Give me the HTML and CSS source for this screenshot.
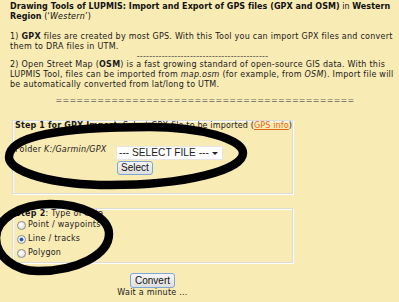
FILE: index.html
```html
<!DOCTYPE html>
<html lang="en">
<head>
<meta charset="utf-8">
<title>Drawing Tools of LUPMIS</title>
<link rel="stylesheet" href="styles.css">
</head>
<body>
<div class="page">
  <p class="title"><b>Drawing Tools of LUPMIS: Import and Export of GPS files (GPX and OSM)</b> in <b>Western Region</b> (‘<i>Western</i>’)</p>
  <p class="para p1">1) <b>GPX</b> files are created by most GPS. With this Tool you can import GPX files and convert them to DRA files in UTM.</p>
  <div class="sep">------------------------------------------</div>
  <p class="para">2) Open Street Map (<b>OSM</b>) is a fast growing standard of open-source GIS data. With this LUPMIS Tool, files can be imported from <i>map.osm</i> (for example, from <i>OSM</i>). Import file will be automatically converted from lat/long to UTM.</p>
  <div class="sep sep2">===========================================</div>

  <div class="form">
    <div class="box box1">
      <div class="legend"><b>Step 1 for GPX Import</b>: Select GPX file to be imported (<a class="link" href="#">GPS info</a>)</div>
      <div class="row">
        <div class="folder">Folder <i>K:/Garmin/GPX</i></div>
        <div class="ctl">
          <div class="select"><span>--- SELECT FILE ---</span><span class="arrow"></span></div>
          <button class="btn btn-select" type="button">Select</button>
        </div>
      </div>
    </div>

    <div class="box box2">
      <div class="legend"><b>Step 2</b>: Type of data</div>
      <label class="radio"><input type="radio" name="t"> Point / waypoints</label>
      <label class="radio"><input type="radio" name="t" checked> Line / tracks</label>
      <label class="radio"><input type="radio" name="t"> Polygon</label>
    </div>

    <div class="convert">
      <button class="btn btn-convert" type="button">Convert</button>
      <div class="wait">Wait a minute ...</div>
    </div>
  </div>

  <svg class="marks" width="399" height="302" viewBox="0 0 399 302" aria-hidden="true">
    <path d="M 9 157 C 9 136, 60 127, 150 127 C 200 127, 243 139, 243 153 C 243 170.7, 183.4 185, 110 185 C 54.2 185, 9 172.5, 9 157 Z"/>
    <path d="M -4 238 C -4 219.2, 20.2 204, 50 204 C 82.6 204, 109 217.4, 109 234 C 109 254.4, 77.2 271, 38 271 C 14.8 271, -4 256.2, -4 238 Z"/>
  </svg>
</div>
</body>
</html>
```

FILE: styles.css
```css
html, body {
  margin: 0;
  padding: 0;
  background: #f9ebb4;
}

.page {
  position: relative;
  width: 399px;
  height: 302px;
  box-sizing: border-box;
  padding: 2px 4px 0 10px;
  overflow: hidden;
  font-family: "DejaVu Sans", Verdana, sans-serif;
  font-size: 8px;
  line-height: 10px;
  letter-spacing: 0.25px;
  color: #1a1a1a;
}

.title {
  margin: 0;
  letter-spacing: 0.05px;
  color: #111;
}

.title i {
  letter-spacing: 0.25px;
}

.para {
  margin: 0;
}

.p1 {
  margin-top: 10px;
}

.sep {
  height: 8px;
  line-height: 10px;
  text-align: center;
  color: #444;
  white-space: nowrap;
}

.sep2 {
  height: 10px;
  margin-top: 6px;
  padding-left: 5px;
  color: #666;
}

.form {
  width: 281px;
  margin-left: 2px;
  margin-top: 14px;
}

.box {
  box-sizing: border-box;
  border: 1px solid #dcdcd4;
  box-shadow: inset 1px 1px 0 #fff, 1px 1px 0 #fff;
  padding: 0 1px 0 2px;
}

.box1 {
  height: 74px;
}

.legend {
  white-space: nowrap;
}

.box1 .legend {
  letter-spacing: 0.15px;
}

.link {
  color: #e0681c;
  text-decoration: underline;
}

.row {
  display: flex;
  margin-top: 14px;
}

.folder {
  width: 101px;
  flex: none;
}

.ctl {
  display: flex;
  flex-direction: column;
  align-items: flex-start;
  padding-top: 1px;
}

.select {
  width: 107px;
  height: 14px;
  box-sizing: border-box;
  background: #fff;
  border: 1px solid #e6e6e6;
  display: flex;
  align-items: center;
  justify-content: space-between;
  padding: 0 4px 0 2px;
  font-family: "Liberation Sans", Arial, sans-serif;
  font-size: 10.2px;
  letter-spacing: 0;
  color: #222;
}

.arrow {
  width: 0;
  height: 0;
  border-left: 3px solid transparent;
  border-right: 3px solid transparent;
  border-top: 3px solid #222;
}

.btn {
  font-family: "Liberation Sans", Arial, sans-serif;
  font-size: 10px;
  letter-spacing: 0;
  color: #111;
  height: 14px;
  padding: 0;
  line-height: 12px;
  border: 1px solid #7da6d2;
  border-radius: 3px;
  background: linear-gradient(#f6f6f6, #dedede);
}

.btn-select {
  margin-top: 1px;
  margin-left: 1px;
  width: 36px;
}

.box2 {
  margin-top: 14px;
  height: 55px;
}

.box2 .legend {
  margin-bottom: -1px;
}

.radio {
  display: flex;
  align-items: center;
  height: 14px;
}

.radio input {
  appearance: none;
  -webkit-appearance: none;
  box-sizing: border-box;
  width: 9px;
  height: 9px;
  margin: 0 2px 0 2px;
  border: 1px solid #8c8c8c;
  border-radius: 50%;
  background: radial-gradient(circle at 40% 40%, #ffffff, #d8d8d8);
}

.radio input:checked {
  background: radial-gradient(circle, #1f4f9a 0, #2f6cc0 1.6px, #ffffff 2.4px, #dcdcdc 4.5px);
}

.convert {
  margin-top: 10px;
  text-align: center;
}

.btn-convert {
  width: 45px;
  height: 15px;
}

.wait {
  margin-top: 0;
}

.marks {
  position: absolute;
  top: 0;
  left: 0;
  pointer-events: none;
}

.marks path {
  fill: none;
  stroke: #000;
  stroke-width: 8.5;
}
```
